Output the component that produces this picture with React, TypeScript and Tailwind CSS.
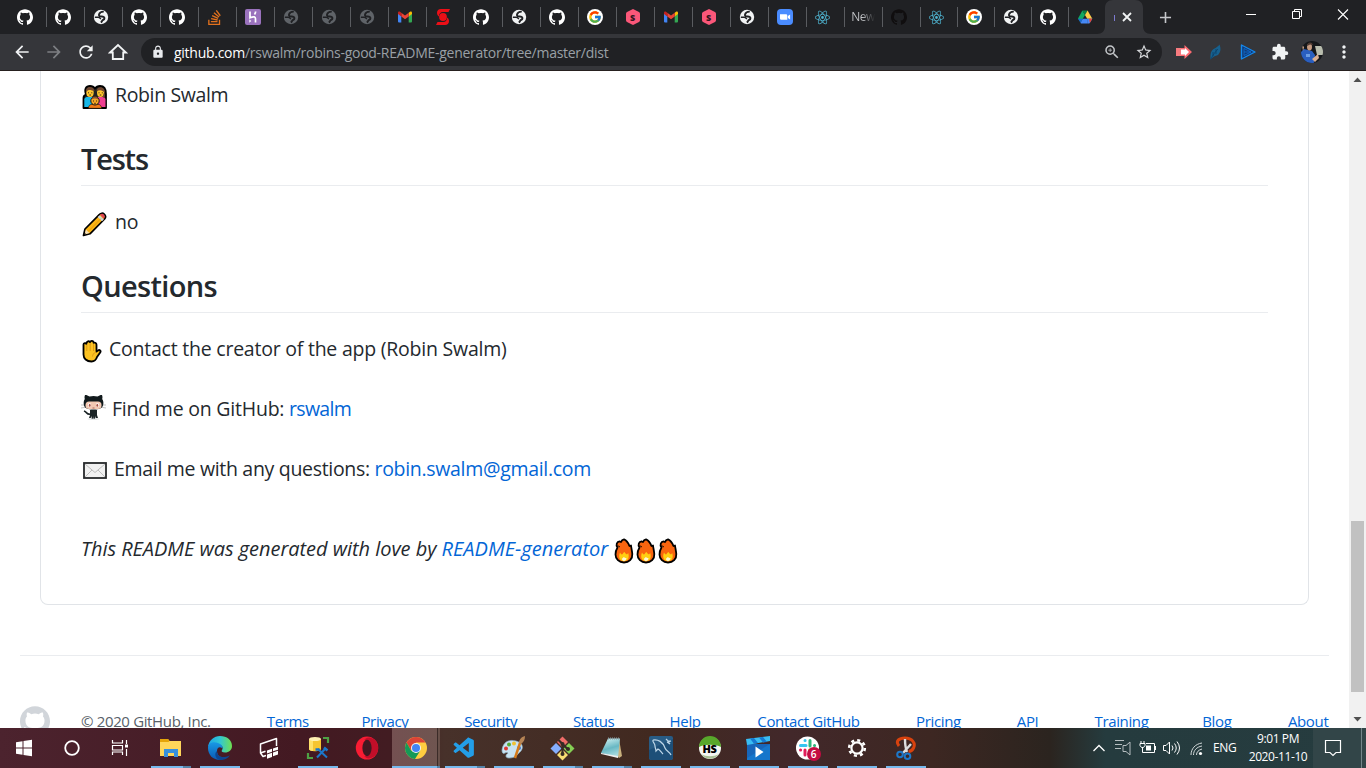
import React from "react";
import { SiGithub, SiStackoverflow, SiReact } from "react-icons/si";
import { FcGoogle } from "react-icons/fc";
import { VscVscode } from "react-icons/vsc";
import {
  MdArrowBack,
  MdArrowForward,
  MdRefresh,
  MdLock,
  MdZoomIn,
  MdStarBorder,
  MdExtension,
  MdMoreVert,
  MdAdd,
} from "react-icons/md";

/* ---------- tab favicons ---------- */

const Globe = ({ color }: { color: string }) => (
  <svg width="16" height="16" viewBox="0 0 16 16">
    <circle cx="8" cy="8" r="7.2" fill={color} />
    <path d="M10.800 2.600C8.500 2.500 6.500 3.800 6 5.600c-.4 1.600 1 1.900 2.600 1.900 1.900 0 3 .7 2.800 2-.2 1.300-1.600 1.300-2.200 2.200-.4.600-.5 1.300-1.400 1.800" fill="none" stroke="#202124" strokeWidth="1.900" />
    <path d="M1.800 8.300h3.400c1.500 0 2 1.300 2.800 1.600" fill="none" stroke="#202124" strokeWidth="1.500" />
  </svg>
);

const Gmail = () => (
  <svg width="16" height="16" viewBox="0 0 16 16">
    <path d="M1 4.2V12.600a1 1 0 0 0 1 1h2.300V7z" fill="#4285f4" />
    <path d="M15 4.200V12.600a1 1 0 0 1-1 1h-2.300V7z" fill="#34a853" />
    <path d="M11.700 3.700 13 2.800c.9-.6 2 0 2 1.100v1l-3.300 2.500z" fill="#fbbc04" />
    <path d="M4.300 3.700 8 6.500l3.700-2.800v3.700L8 10.200 4.300 7.400z" fill="#ea4335" />
    <path d="M4.300 3.700 3 2.800c-.9-.6-2 0-2 1.100v1l3.300 2.500z" fill="#c5221f" />
  </svg>
);

const Heroku = () => (
  <svg width="16" height="16" viewBox="0 0 16 16">
    <rect width="16" height="16" rx="2" fill="#9a72bd" />
    <path d="M5 2.500v6.200c4-1.600 5.500-1 5.500 1v3.800M10.600 2.500c0 1.200-.4 2-1.100 2.900" fill="none" stroke="#fff" strokeWidth="1.700" />
    <path d="M4.300 10.300 6.300 12l-2 1.700z" fill="#fff" />
  </svg>
);

const RedS = () => (
  <svg width="16" height="16" viewBox="0 0 16 16">
    <path d="M15 0H6C3.500 0 2 1.600 2 3.800c0 1.700.6 2.700 1.800 3.700C4 4.500 5.500 3 8 3h5.500z" fill="#ec0f17" />
    <path d="M1 16h9c2.500 0 4-1.600 4-3.800 0-1.700-.6-2.700-1.800-3.700-.2 3-1.700 4.500-4.200 4.500H2.500z" fill="#ec0f17" />
    <circle cx="8" cy="8" r="3.900" fill="#ec0f17" />
  </svg>
);

const Google = () => (
  <div className="flex size-4 items-center justify-center rounded-full bg-white">
    <FcGoogle size={14} />
  </div>
);

const Hexagon = () => (
  <div className="grid size-4 place-items-center">
    <svg className="col-start-1 row-start-1" width="16" height="16" viewBox="0 0 16 16">
      <path d="M7 .400a2 2 0 0 1 2 0l5 2.700a2 2 0 0 1 1 1.700v6.400a2 2 0 0 1-1 1.700l-5 2.700a2 2 0 0 1-2 0l-5-2.700a2 2 0 0 1-1-1.700V4.800a2 2 0 0 1 1-1.700z" fill="#fb5779" />
    </svg>
    <span className="col-start-1 row-start-1 text-[9px] leading-none font-extrabold text-[#33151e]">S</span>
  </div>
);

const Zoom = () => (
  <svg width="16" height="16" viewBox="0 0 16 16">
    <rect width="16" height="16" rx="4" fill="#4a8cff" />
    <path d="M3 5.200h6a1.300 1.300 0 0 1 1.300 1.300v4.300H4.300A1.300 1.300 0 0 1 3 9.500zM10.900 7l2.200-1.600v5.200L10.900 9z" fill="#fff" />
  </svg>
);

const Drive = () => (
  <svg width="16" height="16" viewBox="0 0 16 16">
    <path d="M5.400 1.500 8 6 3.600 13.600 1 9.500z" fill="#11a861" />
    <path d="M5.400 1.500h5.200L8 6z" fill="#0b8043" />
    <path d="M10.600 1.500 15.300 9.800h-5.100L8 6z" fill="#ffcf48" />
    <path d="M5.800 9.800h4.400v4.700H4.200c-.4 0-.7-.3-.6-.900z" fill="#4688f4" />
    <path d="M10.200 9.800h5.100l-2.500 4.300-.6.400h-2z" fill="#4688f4" />
    <path d="M12 9.800h3.300l-2.500 4.300z" fill="#ea4335" />
    <path d="M1 9.800h4.800L3.600 13.800z" fill="#1967d2" />
  </svg>
);

const cat = <SiGithub size={16} color="#fff" />;
const globe = <Globe color="#f1f3f4" />;
const dim = <Globe color="#5f6368" />;
const react = <SiReact size={15} color="#4fb6d3" />;

const wideTabs: React.ReactNode[] = [
  cat, cat, globe, cat, cat,
  <SiStackoverflow size={15} color="#e2711d" />,
  <Heroku />, dim, dim, dim, <Gmail />, <RedS />, cat, globe, cat,
  <Google />, <Hexagon />, <Gmail />, <Hexagon />, globe, <Zoom />, react,
  <span className="ml-[5px] bg-gradient-to-r from-[#c5c7ca] from-45% to-[#202124] bg-clip-text text-[12px] tracking-[-0.5px] whitespace-nowrap text-transparent">New</span>,
  <SiGithub size={16} color="#100e0f" />,
  react,
];
const narrowTabs: React.ReactNode[] = [<Google />, globe, cat, <Drive />];

const TabStrip = () => (
  <div className="flex h-[34px] bg-[#202124] pl-[9px]">
    {wideTabs.map((icon, i) => (
      <div key={i} className={"flex h-[34px] shrink-0 items-center justify-center " + (i === 24 ? "w-[37px]" : "w-[38px]")}>
        <div className="flex h-5 flex-1 items-center justify-center pr-[6px]">{icon}</div>
        <div className="h-5 w-px bg-[#5a5c60]" />
      </div>
    ))}
    {narrowTabs.map((icon, i) => (
      <div key={i} className="flex h-[34px] w-[37px] shrink-0 items-center">
        <div className="flex h-5 flex-1 items-center justify-center pr-[5px]">{icon}</div>
        <div className={"h-5 w-px " + (i === 3 ? "bg-transparent" : "bg-[#5a5c60]")} />
      </div>
    ))}
    <svg className="-ml-[9px] shrink-0" width="54" height="34" viewBox="0 0 54 34">
      <path d="M0 34c5 0 8-3 8-8V8c0-5 3-8 8-8h22c5 0 8 3 8 8v18c0 5 3 8 8 8z" fill="#35363a" />
      <path d="M17.500 15v6" stroke="#7d7ad0" />
      <path d="m26 13 8 8m0-8-8 8" stroke="#f1f3f4" strokeWidth="1.800" />
    </svg>
    <div className="flex w-[28px] items-center justify-center">
      <MdAdd size={19} color="#c6c8cb" />
    </div>
    <svg className="mt-[5px] mr-[15px] ml-auto shrink-0" width="106" height="18" viewBox="0 0 106 18">
      <path d="M1 9.500h10" stroke="#fff" />
      <path d="M47.500 6.500h7v7h-7zM49.500 6.500v-2h7v7h-2" fill="none" stroke="#fff" />
      <path d="m93 4.500 10 10m0-10-10 10" stroke="#fff" strokeWidth="1.100" />
    </svg>
  </div>
);

const Toolbar = () => (
  <div className="flex h-[37px] items-center border-b border-[#26201f] bg-[#35363a]">
    <div className="flex w-[141px] shrink-0 items-center gap-3 pl-3 text-[#f1f3f4]">
      <MdArrowBack size={20} />
      <MdArrowForward size={20} color="#7d7f83" />
      <MdRefresh size={20} />
      <svg width="20" height="20" viewBox="0 0 20 20">
        <path d="M2 10.500 10 3l8 7.500h-2.800V17H4.800v-6.500z" fill="none" stroke="#f1f3f4" strokeWidth="1.800" />
      </svg>
    </div>
    <div className="flex h-7 w-[1021px] shrink-0 items-center rounded-full bg-[#202124] pr-[9px] pl-[10px]">
      <MdLock size={14} color="#e8eaed" />
      <span className="ml-[9px] text-[14px] tracking-[-0.27px] whitespace-nowrap text-[#9aa0a6]">
        <span className="text-white">github.com</span>/rswalm/robins-good-README-generator/tree/master/dist
      </span>
      <MdZoomIn className="ml-auto" size={18} color="#c4c7ca" />
      <MdStarBorder className="ml-[14px]" size={18} color="#d5d7da" />
    </div>
    <svg className="ml-[14px]" width="16" height="14" viewBox="0 0 16 14">
      <path d="M0 3h5v8H0z" fill="#f77b7f" />
      <path d="M5 3h3.500V0L16 7l-7.500 7v-3H5z" fill="#fb6a70" />
      <path d="M5 4.500h4v5H5zM9 3l4 4-4 4z" fill="#fff" />
    </svg>
    <svg className="ml-[17px]" width="14" height="16" viewBox="0 0 14 16">
      <path d="M10.500.500c1.500 4 1.500 7-1.500 10.500L5 12.500 1.500 15.500C1.500 12 1 9 3 6.500S8 4 10.500.500z" fill="#17618f" />
      <path d="M2 15c2-4 4-7 7-10M4 8v4M7 5v5" fill="none" stroke="#0d3f67" strokeWidth=".8" />
    </svg>
    <svg className="ml-[17px]" width="17" height="16" viewBox="0 0 17 16">
      <path d="M1.500 1 15 8l-13.500 7z" fill="#103a75" stroke="#1488ee" strokeWidth="1.400" strokeLinejoin="round" />
      <path d="M4 4.500 11 8l-7 3.500zM4 8h7" fill="none" stroke="#0f6fd4" strokeWidth=".8" />
    </svg>
    <MdExtension className="ml-[14px]" size={18} color="#f1f3f4" />
    <svg className="ml-[12px]" width="22" height="22" viewBox="0 0 22 22">
      <clipPath id="face"><circle cx="11" cy="11" r="11" /></clipPath>
      <g clipPath="url(#face)">
        <path d="M0 0h22v22H0z" fill="#15171a" />
        <path d="M14 5h8v9h-6z" fill="#b9bdae" />
        <path d="M0 11 3 8l4 1 4 1 3 4-1 8H3L0 16z" fill="#2a5fc0" />
        <ellipse cx="8.500" cy="6" rx="2.500" ry="3.400" fill="#c49a80" />
        <path d="M6 5c0-4 5-5 6-1l-3-.5z" fill="#4d3a32" />
        <path d="m1 4 2 2-1 4zM11 18l6-5 1 4-4 4z" fill="#d8ae92" />
        <path d="M5 13h4v3H5z" fill="#6b9de4" />
      </g>
    </svg>
    <MdMoreVert className="ml-[11px]" size={20} color="#f1f3f4" />
  </div>
);

/* ---------- emoji drawings ---------- */

const Family = () => (
  <svg className="mt-1 ml-px" width="26" height="26" viewBox="0 0 26 26">
    <path d="M1.500 24V14c0-2 1-3 2.500-3.500C2 5 4 2 8 2c3 0 4 1 5 2.500 1-1.500 2-2.500 5-2.500 4 0 6 3 6 8v14z" fill="#222" stroke="#000" strokeWidth="1.800" strokeLinejoin="round" />
    <path d="M2.300 23v-7.500c0-2 2-2.500 3.700-2.500h4l2 4-4 6z" fill="#17b8e8" />
    <path d="M23.500 23v-7.500c0-2-2-2.500-3.500-2.500h-4l-2 4 4 6z" fill="#ef3f91" />
    <ellipse cx="8" cy="8.500" rx="3.700" ry="4.500" fill="#ffc62d" />
    <ellipse cx="18.500" cy="8.500" rx="3.500" ry="4.500" fill="#ffc62d" />
    <path d="M4 8c-1-6.500 8-6.500 8.500-1C9 6.500 7 4.500 4 8zM14.500 7.500c0-6.500 9-5.500 8.500 1.500C20 6 18 5.500 14.500 7.500z" fill="#71472f" />
    <path d="M22.200 8c1 3 .6 5 0 6l-1.500-1z" fill="#71472f" />
    <path d="M6.500 24.300c0-3.300 2-4.300 6.500-4.300s6.500 1 6.500 4.300z" fill="#f37a18" stroke="#111" strokeWidth=".6" />
    <circle cx="13" cy="16.800" r="4.200" fill="#f9a825" stroke="#111" />
    <path d="M9.300 15.500c.7-4 6.700-4 7.400 0-3-1.500-5-1.500-7.400 0z" fill="#8c552f" />
    <path d="M6 8.800h1M9.300 8.800h1M16.500 8.800h1M19.800 8.800h1M11 17h1M14 17h1M7.300 11h1.700M17.700 11h1.600M12.200 19.300h1.600" stroke="#3a2515" />
  </svg>
);

const Pencil = () => (
  <svg className="mt-[3px] ml-px" width="26" height="26" viewBox="0 0 26 26">
    <path d="m1.500 24.500 1.500-6.500L17.500 3.300c1.200-1.300 3.300-1.500 4.700-.2 1.600 1.500 1.600 3.500.4 4.900L8 22.800z" fill="#fcb514" stroke="#000" strokeWidth="1.700" strokeLinejoin="round" />
    <path d="m18 3.800c1.500-1.500 3-1.300 4 0 1 1 1 2.500-.3 4z" fill="#df4353" />
    <path d="m15.700 6 1.800-1.800 4.300 4.300-1.800 1.800z" fill="#ced5d9" />
    <path d="m2.600 23.400 1.300-4.900 3.600 3.600z" fill="#f4dfb9" />
    <path d="m2 24.100.700-2.300 1.500 1.500z" />
    <path d="M6.300 20.300 18.800 7.700" stroke="#da920b" strokeWidth=".8" />
  </svg>
);

const Hand = () => (
  <svg className="mt-[3px] ml-px" width="20" height="24" viewBox="0 0 20 24">
    <path d="M1.500 13.500V5.500C1.500 4 3.700 3.500 4.300 5 4.300 2 7.500 1.500 8 3.200c.8-2 3.500-1.600 3.600.6 1.500-.7 2.900.3 2.900 1.900v6.800l1.500-1c1.600-1.200 3.300.5 2.200 1.900L15 18c-.9 3-2.500 4.500-5.500 4.500-5 0-8-3-8-7z" fill="#fcc221" stroke="#000" strokeWidth="1.800" strokeLinejoin="round" />
    <path d="M4.800 5.500V12M8.200 4V12M11.500 5v7M14 13c-2.500 1-3.500 3-3.500 4.500" fill="none" stroke="#d99515" strokeWidth=".9" />
  </svg>
);

const Octocat = () => (
  <svg className="mb-1" width="25" height="26" viewBox="0 0 25 26">
    <path d="M0 11h6M0 14l6-1M19 11h6M19 13l6 1" stroke="#aaa" strokeWidth=".7" />
    <path d="M4 1c2 0 3 .6 4.500 1.600 3-.7 5-.7 8 0C18 1.600 19 1 21 1c.7 2 .5 3 .2 4 1.300 2 1.500 4 .8 6.500-1 3-4 4-9.500 4s-8.500-1-9.500-4C2.500 9 2.500 7 3.800 5 3.500 4 3.300 3 4 1z" fill="#111a1c" />
    <rect x="4.500" y="7.500" width="16" height="7.500" rx="3.500" fill="#f3c9b3" />
    <ellipse cx="8.500" cy="11" rx="1.500" ry="2.100" fill="#fff" />
    <ellipse cx="16.500" cy="11" rx="1.500" ry="2.100" fill="#fff" />
    <ellipse cx="8.700" cy="11.200" rx=".9" ry="1.500" fill="#a85042" />
    <ellipse cx="16.300" cy="11.200" rx=".9" ry="1.500" fill="#a85042" />
    <path d="M11.500 14h2" stroke="#8d4439" strokeWidth=".7" />
    <path d="M9 16h7v5l1 3h-2.200l-.5-2-.3 3h-1.300v-3l-.4 3H10.700l-.2-3-.8 2H8l1-3z" fill="#1a2325" />
    <path d="M9 20c-3 1-3-2-6-3" fill="none" stroke="#1a2325" strokeWidth="1.600" />
    <ellipse cx="12.500" cy="25" rx="6" ry=".7" fill="#bcc3c7" opacity=".6" />
  </svg>
);

const Envelope = () => (
  <svg className="mt-[3px] ml-[2px]" width="24" height="17" viewBox="0 0 24 17">
    <rect x="1" y="1" width="22" height="15" fill="#f1f1f1" stroke="#26282b" strokeWidth="1.800" />
    <path d="m2 2 10 8.500L22 2M2 15l7-7M22 15l-7-7" fill="none" stroke="#bdbdbd" />
  </svg>
);

const Fire = () => (
  <svg width="22" height="26" viewBox="0 0 22 26">
    <path d="M4.500 9.500C2.500 7 4 3.500 6.500 3.500c.5-.2 1 .5 1.500.5C8.500 2.500 9.500 1.500 11 1.300c3.500 1.500 4.500 4.200 5.500 6.700l1.500-.5c.3 2.500 1 5 1.300 8.500.4 5-3.300 8.500-8.300 8.500s-8.500-3.500-8.500-8c0-3 .5-4.500 2-7z" fill="#f9650f" stroke="#000" strokeWidth="1.800" strokeLinejoin="round" />
    <path d="M5 7.500c.5 1 1 1.500 2 1" fill="none" stroke="#000" />
    <path d="M7 14.500c.8 1 1.200 2 2 2 1-.5 1.200-2 2.500-2.500.5 1 1.500 2 2.500 2.500l1.200-1.500c1.500 5-.2 8.200-4.200 8.200s-6-3.700-4-8.700z" fill="#ffcf12" />
    <path d="M9 20.500c1 0 1.200-1.200 2-1.500.5 1 1.500 1.300 2.500 1-.1 1.800-1.200 3-2.500 3s-2.200-1-2-2.500z" fill="#fff8d5" />
  </svg>
);

/* ---------- page ---------- */

const Row = ({ icon, children }: { icon: React.ReactNode; children: React.ReactNode }) => (
  <p className="flex h-[30px] items-center text-[19.5px] whitespace-nowrap">
    {icon}
    {children}
  </p>
);

const Heading = ({ children }: { children: React.ReactNode }) => (
  <h2 className="mt-[29px] mb-[21px] h-[47px] border-b border-[#eaecef] text-[29px] leading-[40px] font-semibold">{children}</h2>
);

const footerLinks: [string, string][] = [
  ["Terms", "w-[39px]"],
  ["Privacy", "w-[47px]"],
  ["Security", "w-[53px]"],
  ["Status", "w-[41px]"],
  ["Help", "w-[32px]"],
  ["Contact GitHub", "w-[103px]"],
  ["Pricing", "w-[45px]"],
  ["API", "w-[22px]"],
  ["Training", "w-[52px]"],
  ["Blog", "w-[30px]"],
  ["About", "w-[41px]"],
];

const Page = () => (
  <div className="flex h-[657px] overflow-hidden bg-white text-[#24292e]">
    <main className="w-[1349px] px-5">
      <article className="mx-5 h-[534px] w-[1269px] rounded-b-lg border border-t-0 border-[#e1e4e8] px-10 pt-[9px] text-[20px] leading-[30px]">
        <Row icon={<Family />}>
          <span className="ml-[7px] tracking-[-0.36px]">Robin Swalm</span>
        </Row>
        <Heading><span className="tracking-[-1.2px]">Tests</span></Heading>
        <Row icon={<Pencil />}>
          <span className="ml-[7px] tracking-[-0.3px]">no</span>
        </Row>
        <Heading><span className="tracking-[-0.65px]">Questions</span></Heading>
        <div className="flex flex-col gap-[30px]">
          <Row icon={<Hand />}>
            <span className="ml-[7px] tracking-[-0.23px]">Contact the creator of the app (Robin Swalm)</span>
          </Row>
          <Row icon={<Octocat />}>
            <span className="ml-[6px] tracking-[-0.22px]">Find me on GitHub: <a className="tracking-[-0.7px] text-[#0366d6]">rswalm</a></span>
          </Row>
          <Row icon={<Envelope />}>
            <span className="ml-[7px] tracking-[-0.31px]">Email me with any questions: <a className="text-[#0366d6]">robin.swalm@gmail.com</a></span>
          </Row>
        </div>
        <p className="mt-[50px] flex h-[30px] items-center whitespace-nowrap italic">
          <span className="tracking-[-0.04px]">This README was generated with love by <a className="tracking-[0.02px] text-[#0366d6]">README-generator</a></span>
          <span className="mt-1 ml-[5px] flex"><Fire /><Fire /><Fire /></span>
        </p>
      </article>
      <footer className="mt-[50px] flex border-t border-[#eaecef] pt-[50px] text-[15px] leading-[22px]">
        <SiGithub size={30} color="#d1d5da" className="shrink-0" />
        <div className="ml-[31px] flex flex-1 justify-between pt-[4px] tracking-[-0.35px] whitespace-nowrap text-[#0366d6]">
          <span className="w-[130px] text-[#586069]">© 2020 GitHub, Inc.</span>
          {footerLinks.map(([label, width]) => (
            <a key={label} className={width}>{label}</a>
          ))}
        </div>
      </footer>
    </main>
    <div className="flex w-[17px] flex-col items-center bg-[#f1f1f1]">
      <svg width="17" height="17" viewBox="0 0 17 17"><path d="m4.500 11 4-4.500 4 4.500z" fill="#505050" /></svg>
      <div className="mt-[433px] h-[171px] w-[13px] bg-[#c1c1c1]" />
      <svg className="mt-auto" width="17" height="17" viewBox="0 0 17 17"><path d="m4.500 6 4 4.500 4-4.500z" fill="#505050" /></svg>
    </div>
  </div>
);

/* ---------- taskbar ---------- */

const Explorer = () => (
  <svg width="24" height="24" viewBox="0 0 24 24">
    <path d="M1 3h8l1.500 2H22v15H1z" fill="#ffd65a" />
    <path d="M1 3h8l1.500 2-1 1H1z" fill="#e5a50a" />
    <path d="M5 21v-8h14v8h-4v-4H9v4z" fill="#3890dc" />
  </svg>
);
const Edge = () => (
  <svg width="24" height="24" viewBox="0 0 24 24">
    <defs>
      <linearGradient id="ea"><stop stopColor="#1ea5e6" /><stop offset=".5" stopColor="#31c7d4" /><stop offset="1" stopColor="#70e050" /></linearGradient>
      <linearGradient id="eb" x2="0" y2="1"><stop stopColor="#1899e5" /><stop offset="1" stopColor="#0b58b3" /></linearGradient>
    </defs>
    <path d="M0 11C1 4 6 0 12 0c7 0 12 4 12 10 0 4-3 6.500-7 6.500-3 0-4-1-3-2.500 1.500-2 .500-5-3-5C6 9 2 8 0 11z" fill="url(#ea)" />
    <path d="M0 12c0-5 5-7 10-5 3 1 5 3 4.500 5.500C12 10 9 11 9 15c0 4 3 7 8 7-2 1.300-3.500 2-5 2C5 24 0 19 0 12z" fill="url(#eb)" />
    <path d="M9 15c0 4 3 6 7 6 3 0 5-1.200 6-2-2 4-6 5-10 5-5-1-6-7-3-9z" fill="#0d4591" />
  </svg>
);
const Cards = () => (
  <svg width="20" height="22" viewBox="0 0 20 22">
    <path d="M7 18.500 4 19.500 1.500 16V7l16-5.500V9M1.500 16l5-1.800" fill="none" stroke="#fff" strokeWidth="1.500" strokeLinejoin="round" />
    <path d="m8 13.500 5-1.700v3L8 16.500zM14 11.500l5-1.800v3L14 14.300zM8 17.500l5-1.700V20l-5 1.700zM14 15.500l5-1.700v3.700L14 19.300z" fill="#fff" />
  </svg>
);
const Sql = () => (
  <svg width="24" height="24" viewBox="0 0 24 24">
    <path d="M3 3v10c0 3 12 3 12 0V3z" fill="#f6c531" /><path d="M3 3v10c0 1 2 2 4 2V3z" fill="#ffe16a" />
    <ellipse cx="9" cy="3" rx="6" ry="2" fill="#fff0b2" />
    <path d="M17 2h5v5M2 17v5h5" fill="none" stroke="#4ea144" strokeWidth="2.200" />
    <path d="m11 21.500 8-8.500M12 13l9 8.500" stroke="#1c77ca" strokeWidth="2" />
    <path d="M9.500 13.500h4M18 11.500l3.500 3" stroke="#1c77ca" strokeWidth="2.500" />
  </svg>
);
const Opera = () => (
  <svg width="24" height="24" viewBox="0 0 24 24">
    <ellipse cx="12" cy="12" rx="11.200" ry="11.500" fill="#f81c33" />
    <path d="M16 2c9 2 10 17 0 20-3 1-5 0-7-2 3 1 6-2 6-8s-3-9-6-8c2-2 4-3 7-2z" fill="#c20e29" />
    <ellipse cx="12" cy="12" rx="4.600" ry="8.200" fill="#411821" />
  </svg>
);
const Chrome = () => (
  <svg width="24" height="24" viewBox="0 0 24 24">
    <circle cx="12" cy="12" r="11" fill="#ffcd40" />
    <path d="M2.500 6.500A11 11 0 0 1 21.500 6.500H12L7.200 14.800z" fill="#db4437" />
    <path d="M2.500 6.500A11 11 0 0 0 11 23l5.200-8.300H7.200z" fill="#159957" />
    <circle cx="12" cy="12" r="5" fill="#f4f4f4" /><circle cx="12" cy="12" r="4" fill="#4285f4" />
  </svg>
);
const Paint = () => (
  <svg width="25" height="24" viewBox="0 0 25 24">
    <path d="M1 14C2 6 8 3 15 5c7 2 8 7 4 11-3 3-5 6-11 6-3 0-4-2-2-4 2-1 0-2-2-1-2 1-3 0-3-3z" fill="#c9e3f2" stroke="#8eb1c6" strokeWidth=".7" />
    <circle cx="8" cy="8.500" r="2" fill="#55ab38" /><circle cx="13" cy="7.500" r="2" fill="#f1c232" /><circle cx="5" cy="12.500" r="2" fill="#dd3a32" /><circle cx="18" cy="12" r="2" fill="#4177ce" />
    <path d="M14 22 19.500 5.500" stroke="#d57a1a" strokeWidth="2.500" />
    <path d="M18 7c0-3 2-6 6-7 0 3-1 6-4 8z" fill="#b68455" />
  </svg>
);
const Git = () => (
  <svg width="25" height="25" viewBox="0 0 25 25">
    <path d="m12.500.500 5.500 5.500-5.500 5.500L7 6z" fill="#ef6c68" /><path d="m6 7 5.500 5.500L6 18 .5 12.500z" fill="#85afff" />
    <path d="m19 7 5.500 5.500L19 18l-5.500-5.500z" fill="#85cf54" /><path d="m12.500 13.500L18 19l-5.500 5.500L7 19z" fill="#f8dd73" />
    <path d="m8.500 4 4 4v10M12.500 8l5 5" fill="none" stroke="#352a25" strokeWidth="2.200" />
    <circle cx="12.500" cy="8" r="2" fill="#352a25" /><circle cx="12.500" cy="18" r="2" fill="#352a25" /><circle cx="18" cy="13" r="2" fill="#352a25" />
  </svg>
);
const Notepad = () => (
  <svg width="24" height="24" viewBox="0 0 24 24">
    <defs><linearGradient id="np" x2=".3" y2="1"><stop stopColor="#d8f4f3" /><stop offset=".6" stopColor="#68b8c4" /><stop offset="1" stopColor="#a5d9de" /></linearGradient></defs>
    <path d="m19 3 3 17-3 2-3-4z" fill="#c9b17e" /><path d="M8 2.500h12l-2 19L1 17z" fill="url(#np)" />
    <path d="m1 17 17 3v2L1 18z" fill="#eee" /><path d="M8 2.500h12" stroke="#829aa0" strokeWidth="2" strokeDasharray="1 1" />
  </svg>
);
const MySql = () => (
  <svg width="24" height="24" viewBox="0 0 24 24">
    <rect width="24" height="24" rx="2" fill="#285c85" /><path d="M0 14 24 3v19l-2 2H2l-2-2z" fill="#1d4f78" />
    <path d="M4 4c5-1 10 2 12 8 1 3 5 4 6 7M4 4c-1 2 2 3 2 6 0 2 1 3 1 5l2-2c2 1 3 3 5 5M17 3l2 2 3 0-3 1 2 2-3-2" fill="none" stroke="#bfd7e8" strokeWidth="1.200" />
  </svg>
);
const HeidiSql = () => (
  <div className="grid size-6 place-items-center">
    <svg className="col-start-1 row-start-1" width="24" height="24" viewBox="0 0 24 24">
      <circle cx="12" cy="12" r="11" fill="#f4f6f1" /><path d="M1 11a11 11 0 0 1 22 0c-5-3-17-3-22 0z" fill="#58a82b" />
      <path d="M3 18a11 11 0 0 0 18 0c-5 3-13 3-18 0z" fill="#a9bf95" />
    </svg>
    <span className="col-start-1 row-start-1 text-[11px] leading-none font-extrabold tracking-[-0.5px] text-black">HS</span>
  </div>
);
const Movies = () => (
  <svg width="25" height="25" viewBox="0 0 25 25">
    <path d="M1 8h23v16H1z" fill="#1676cb" /><path d="M1 8h23L1 22z" fill="#1766ba" />
    <path d="M0 3 24 0v5L1 9z" fill="#39bdf3" /><path d="m4 2.500 4-.5 4 5-4 .8zM13 1.400l4-.5 4 5-4 .7z" fill="#1679d2" />
    <path d="m9.500 10.500 8 5.500-8 5.500z" fill="#fff" />
  </svg>
);
const Slack = () => (
  <div className="relative size-6">
    <svg width="24" height="24" viewBox="0 0 24 24">
      <circle cx="11.500" cy="12" r="11.500" fill="#fff" />
      <g fill="none" strokeWidth="3" strokeLinecap="round">
        <path d="M4.500 9.500H10M9 4.500h.1" stroke="#36c5f0" /><path d="M14 4.500V10M18.500 9.500h.1" stroke="#2eb67d" />
        <path d="M13.500 14H19M14 19h.1" stroke="#ecb22e" /><path d="M9 14v5M4.500 14h.1" stroke="#e01e5a" />
      </g>
    </svg>
    <span className="absolute top-[11px] left-[11px] flex size-[14px] items-center justify-center rounded-full bg-[#c40c43] text-[10px] leading-none font-semibold text-white">6</span>
  </div>
);
const Gear = () => (
  <svg width="20" height="20" viewBox="0 0 20 20">
    <circle cx="10" cy="10" r="7.800" fill="none" stroke="#fff" strokeWidth="2.600" strokeDasharray="3.060 3.060" />
    <circle cx="10" cy="10" r="5.600" fill="none" stroke="#fff" strokeWidth="2.200" />
  </svg>
);
const Snip = () => (
  <svg width="22" height="24" viewBox="0 0 22 24">
    <path d="M4 10C0 5 4 2 10 2c7 0 11 5 8.500 10-1 2-3 3.500-5 3.500" fill="none" stroke="#d8420e" strokeWidth="3" />
    <path d="M10 3c0 5 0 8 2 13M16 8 8 17" stroke="#ddd" strokeWidth="2.400" />
    <circle cx="5" cy="18.500" r="2.800" fill="none" stroke="#1e77c8" strokeWidth="2" /><circle cx="12.500" cy="20.200" r="2.800" fill="none" stroke="#1e77c8" strokeWidth="2" />
  </svg>
);

type App = { icon: React.ReactNode; state: "none" | "one" | "many" | "active" };
const apps: App[] = [
  { icon: <Explorer />, state: "many" },
  { icon: <Edge />, state: "one" },
  { icon: <Cards />, state: "none" },
  { icon: <Sql />, state: "one" },
  { icon: <Opera />, state: "none" },
  { icon: <Chrome />, state: "active" },
  { icon: <VscVscode size={25} color="#239ee8" />, state: "many" },
  { icon: <Paint />, state: "one" },
  { icon: <Git />, state: "many" },
  { icon: <Notepad />, state: "many" },
  { icon: <MySql />, state: "one" },
  { icon: <HeidiSql />, state: "one" },
  { icon: <Movies />, state: "one" },
  { icon: <Slack />, state: "one" },
  { icon: <Gear />, state: "one" },
  { icon: <Snip />, state: "one" },
];

const Underline = ({ state }: { state: App["state"] }) => {
  if (state === "none") return <div className="h-[2px]" />;
  if (state === "one") return <div className="ml-1 h-[2px] w-10 bg-[#76b9ed]" />;
  if (state === "many")
    return (
      <div className="ml-1 flex h-[2px] w-10">
        <div className="w-8 bg-[#76b9ed]" />
        <div className="w-2 bg-[#5483a8]" />
      </div>
    );
  return (
    <div className="flex h-[2px]">
      <div className="w-[45px] bg-[#76b9ed]" />
      <div className="w-[3px] bg-[#5483a8]" />
    </div>
  );
};

const Taskbar = () => (
  <div className="flex h-10 bg-[linear-gradient(90deg,#4c232e_0px,#431922_300px,#421c22_390px,#47312a_445px,#412920_650px,#42282a_790px,#3d2722_930px,#2b241f_1050px,#253b3e_1105px,#263c3f_1366px)]">
    <svg className="shrink-0" width="147" height="40" viewBox="0 0 147 40">
      <path d="m16 14.200 6.500-1v6.300H16zM23.500 13l8.500-1.200v7.700h-8.500zM16 20.500h6.500v6.300l-6.500-1zM23.500 20.500H32v7.700L23.500 27z" fill="#fff" />
      <circle cx="72" cy="20" r="6.800" fill="none" stroke="#fff" strokeWidth="1.800" />
      <path d="M112.500 12v3h10v-3M112.500 27v-3h10v3M112.500 17.500h10v4.500h-10zM126.500 12v4M126.500 21v7" fill="none" stroke="#fff" strokeWidth="1.200" />
      <path d="M125 16.500h3v3h-3z" fill="#fff" />
    </svg>
    {apps.map(({ icon, state }, i) => (
      <div key={i} className={"flex w-[49px] shrink-0 flex-col " + (state === "active" ? "bg-[linear-gradient(90deg,#745051_0px,#6f5550_45px,#3b2b28_45px,#3b2b28_46px,#675049_46px,#675049_48px,transparent_48px)]" : "")}>
        <div className="flex h-[38px] items-center justify-center pt-[2px] pr-[2px]">{icon}</div>
        <Underline state={state} />
      </div>
    ))}
    <svg className="ml-auto shrink-0" width="120" height="40" viewBox="0 0 120 40" fill="none" stroke="#fff">
      <path d="m7.500 23 5.500-5.500 5.500 5.500" strokeWidth="1.300" />
      <path d="M29 12.500h9M29 16.500h7M29 20.500h6" stroke="#b6bec0" />
      <path d="M37 17.500h3l4-3.500v13l-4-3.500h-3z" stroke="#b6bec0" />
      <path d="M60 15.500h8.500v9h-9.500M69.500 18v4M54 15.500h5v2l-1.500 2h-2l-1.500-2zM55 13v2M58 13v2M56.500 20v4.500h3" />
      <path d="M60 17.500h5v5h-5z" fill="#fff" stroke="none" />
      <path d="M77.500 17.500h2.500l3.500-3.500v12L80 22.500h-2.500zM86 17.500q2 2.500 0 5M88.500 15.500q3.500 4.500 0 9M91 13.500q5 6.500 0 13" />
      <path d="M105 27c0-6 4-11 11-12M107.500 27c0-4.500 3-8 8.500-9M110.500 27c0-3 2-5 5.500-6" stroke="#d2d8d9" />
      <circle cx="114.500" cy="25.500" r="1.600" fill="#fff" stroke="none" />
    </svg>
    <div className="flex items-center text-[12px] whitespace-nowrap text-white">
      <span className="w-[36px] pl-[7px] tracking-[-0.4px]">ENG</span>
      <div className="w-[71px] pl-px text-center leading-[18px] tracking-[-0.4px]">
        <div>9:01 PM</div>
        <div>2020-11-10</div>
      </div>
    </div>
    <div className="flex w-[53px] bg-[#324548]">
      <svg width="53" height="40" viewBox="0 0 53 40">
        <path d="M12.500 12.500h15v12h-4.500l-3 3-3-3h-4.500z" fill="none" stroke="#fff" strokeWidth="1.200" />
        <path d="M48.500 0v40" stroke="#74868a" />
      </svg>
    </div>
  </div>
);

export default function App() {
  return (
    <div className="h-[768px] w-[1366px] overflow-hidden font-['Open_Sans','Noto_Sans',sans-serif]">
      <TabStrip />
      <Toolbar />
      <Page />
      <Taskbar />
    </div>
  );
}
